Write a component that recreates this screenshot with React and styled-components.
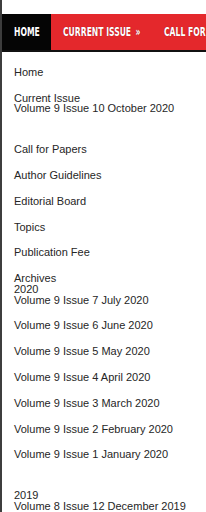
import React from "react";
import styled, { createGlobalStyle } from "styled-components";

const GlobalStyle = createGlobalStyle`
  html, body {
    margin: 0;
    padding: 0;
    background: #fff;
  }
  body {
    font-family: "Liberation Sans", Arial, sans-serif;
  }
`;

const navItems = [
  { label: "HOME", active: true, width: 49 },
  { label: "CURRENT ISSUE", arrow: true, width: 101 },
  { label: "CALL FOR PAPERS", width: 120 },
];

// gap: space before the line (normal item gap, none for a continued line, double after a group)
const menu = [
  { text: "Home", gap: "first" },
  { text: "Current Issue" },
  { text: "Volume 9 Issue 10 October 2020", gap: "none" },
  { text: "Call for Papers", gap: "double" },
  { text: "Author Guidelines" },
  { text: "Editorial Board" },
  { text: "Topics" },
  { text: "Publication Fee" },
  { text: "Archives" },
  { text: "2020", gap: "none" },
  { text: "Volume 9 Issue 7 July 2020", gap: "none" },
  { text: "Volume 9 Issue 6 June 2020" },
  { text: "Volume 9 Issue 5 May 2020" },
  { text: "Volume 9 Issue 4 April 2020" },
  { text: "Volume 9 Issue 3 March 2020" },
  { text: "Volume 9 Issue 2 February 2020" },
  { text: "Volume 9 Issue 1 January 2020" },
  { text: "2019", gap: "double" },
  { text: "Volume 8 Issue 12 December 2019", gap: "none" },
];

const App = () => {
  return (
    <Page>
      <GlobalStyle />
      <Nav>
        {navItems.map((item) => (
          <NavItem key={item.label} $active={item.active} $w={item.width}>
            <NavLabel $active={item.active}>
              {item.label}
              {item.arrow && <Arrow>»</Arrow>}
            </NavLabel>
          </NavItem>
        ))}
      </Nav>
      <Menu>
        {menu.map((m, i) => (
          <MenuLine key={i} $gap={m.gap}>
            {m.text}
          </MenuLine>
        ))}
      </Menu>
    </Page>
  );
};

export default App;

const Page = styled.div`
  width: 206px;
  height: 512px;
  overflow: hidden;
  box-sizing: border-box;
  border-left: 2px solid #3d3d3d;
  padding-top: 14px;
`;

const Nav = styled.div`
  display: flex;
  height: 36px;
  background: #e4282c;
  border-bottom: 2px solid #111;
  white-space: nowrap;
  overflow: hidden;
`;

const NavItem = styled.div`
  display: flex;
  align-items: center;
  flex-shrink: 0;
  box-sizing: border-box;
  width: ${(p) => p.$w}px;
  padding-left: 12px;
  background: ${(p) => (p.$active ? "#050505" : "transparent")};
`;

const NavLabel = styled.span`
  display: inline-block;
  transform: scaleX(0.74);
  transform-origin: left center;
  color: #fff;
  font-family: "DejaVu Sans Condensed", "DejaVu Sans", sans-serif;
  font-weight: bold;
  font-size: 11.5px;
  text-shadow: ${(p) => (p.$active ? "none" : "0 0 1px rgba(90, 0, 0, 0.6)")};
`;

const Arrow = styled.span`
  margin-left: 6px;
`;

const Menu = styled.div`
  padding-left: 12px;
  color: #262626;
  font-size: 11px;
  line-height: 10.7px;
`;

const MenuLine = styled.div`
  white-space: nowrap;
  margin-top: ${(p) =>
    p.$gap === "none"
      ? "0"
      : p.$gap === "double"
      ? "30.1px"
      : p.$gap === "first"
      ? "14.85px"
      : "15.1px"};
`;
